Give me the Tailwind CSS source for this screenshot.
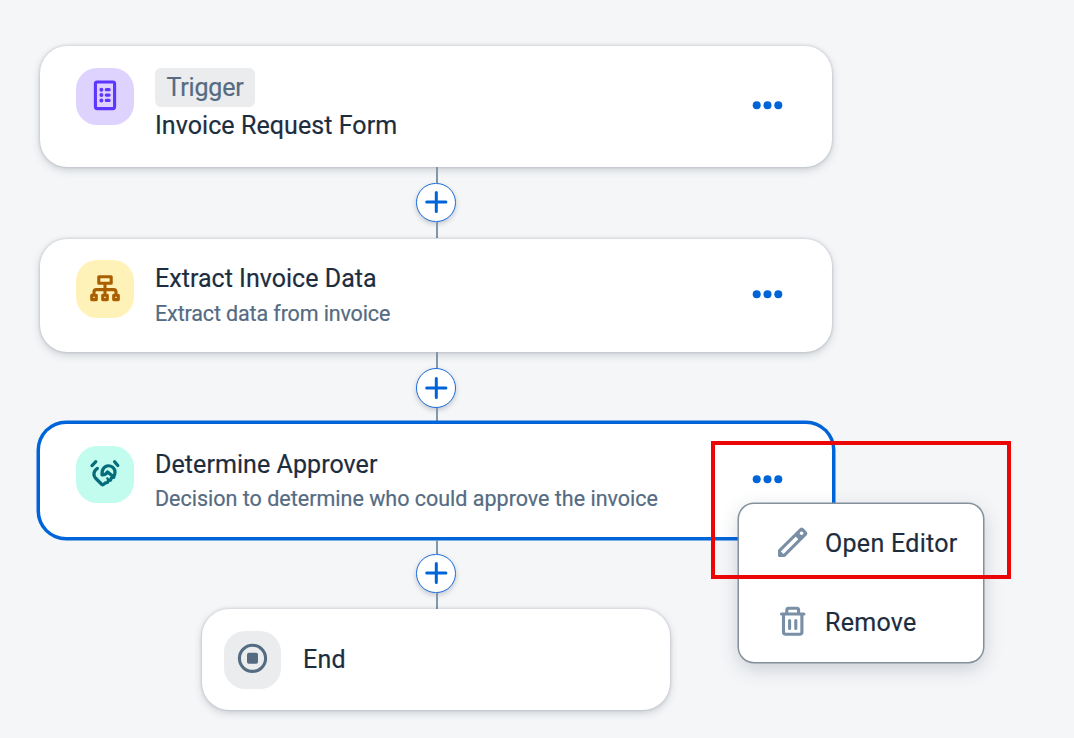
<!DOCTYPE html>
<html lang="en">
<head>
<meta charset="utf-8">
<title>Process flow</title>
<script src="https://cdn.jsdelivr.net/npm/@tailwindcss/browser@4"></script>
</head>
<body class="bg-[#f5f6f8] text-[#1d2d3e] [-webkit-text-stroke:0.2px]" style="font-family: Roboto, 'Liberation Sans', sans-serif">
<main class="relative w-[1074px] h-[738px] overflow-hidden pl-10 pt-[46px]">
  <div class="w-[792px] flex flex-col items-center">

    <!-- Trigger -->
    <section class="w-full h-[121px] rounded-[27px] bg-white shadow-[0_0_3px_rgba(34,53,72,0.25),0_3px_8px_rgba(34,53,72,0.2)] flex items-start pl-9 pt-[22px]">
      <div class="w-[58px] h-[57px] rounded-[21px] bg-[#ded3ff] flex justify-center">
        <svg class="w-[58px] h-[57px]" viewBox="0 0 58 57" fill="none" stroke="#5d36ff">
          <rect x="19.4" y="14" width="19.2" height="26.6" rx="1.8" stroke-width="3.1"/>
          <g stroke-width="3.2" stroke-linecap="round"><path d="M25.4 21.7v0M25.4 27.1v0M25.4 32.4v0" stroke-width="4"/><path d="M30.3 21.7h2.8M30.3 27.1h2.8M30.3 32.4h2.8"/></g>
        </svg>
      </div>
      <div class="ml-[21px] flex flex-col items-start">
        <div class="w-[100px] h-[39px] rounded-[6px] bg-[#eaecee] text-[#556b82] text-[25px] leading-[39px] text-center tracking-[-0.2px]">Trigger</div>
        <div class="h-[36px] text-[25px] leading-[37px] whitespace-nowrap tracking-[0.07px]">Invoice Request Form</div>
      </div>
      <svg class="ml-auto mr-[49px] mt-[32px] w-[31px] h-[10px]" viewBox="0 0 31 10" fill="#0064d9"><circle cx="4.7" cy="5.2" r="4"/><circle cx="15.5" cy="5.2" r="4"/><circle cx="26.3" cy="5.2" r="4"/></svg>
    </section>

    <div class="h-[71px] w-10 flex flex-col items-center">
      <div class="h-4 w-[2px] ml-[2px] bg-[#8496a9]"></div>
      <div class="w-10 h-[39px] shrink-0 rounded-full border-[1.5px] border-[#1b6cdc] bg-white shadow-[0_2px_5px_rgba(34,53,72,0.25)] flex items-center justify-center">
        <svg class="size-6 mb-[1px]" viewBox="0 0 24 24" stroke="#0064d9" stroke-width="3" stroke-linecap="round"><path d="M12.3 2.4v19.2M2.7 12h19.2"/></svg>
      </div>
      <div class="flex-1 w-[2px] ml-[2px] bg-[#8496a9]"></div>
    </div>

    <!-- Extraction step -->
    <section class="w-full h-[113px] mt-[1px] rounded-[27px] bg-white shadow-[0_0_3px_rgba(34,53,72,0.25),0_3px_8px_rgba(34,53,72,0.2)] flex items-start pl-9 pt-[21px]">
      <div class="w-[58px] h-[58px] rounded-[21px] bg-[#fff2b8]">
        <svg class="size-[58px]" viewBox="0 0 58 58" fill="none" stroke="#a95f00" stroke-width="3.1" stroke-linejoin="round" stroke-linecap="round">
          <rect x="22.8" y="16.7" width="12.4" height="6.6"/><path d="M29 23.5v11M18 34.5v-2.6q0-2.3 2.3-2.3h17.4q2.3 0 2.3 2.3v2.6"/>
          <rect x="15.7" y="35.3" width="4.6" height="4.3"/><rect x="26.7" y="35.3" width="4.6" height="4.3"/><rect x="37.7" y="35.3" width="4.6" height="4.3"/>
        </svg>
      </div>
      <div class="ml-[21px] whitespace-nowrap">
        <div class="text-[25px] leading-[37px] tracking-[0.03px]">Extract Invoice Data</div>
        <div class="text-[21.5px] leading-[33px] tracking-[-0.13px] text-[#556b82]">Extract data from invoice</div>
      </div>
      <svg class="ml-auto mr-[49px] mt-[29px] w-[31px] h-[10px]" viewBox="0 0 31 10" fill="#0064d9"><circle cx="4.7" cy="5.2" r="4"/><circle cx="15.5" cy="5.2" r="4"/><circle cx="26.3" cy="5.2" r="4"/></svg>
    </section>

    <div class="h-[69px] w-10 flex flex-col items-center">
      <div class="h-4 w-[2px] ml-[2px] bg-[#8496a9]"></div>
      <div class="size-10 shrink-0 rounded-full border-[1.5px] border-[#1b6cdc] bg-white shadow-[0_2px_5px_rgba(34,53,72,0.25)] flex items-center justify-center">
        <svg class="size-6" viewBox="0 0 24 24" stroke="#0064d9" stroke-width="3" stroke-linecap="round"><path d="M12.3 2.4v19.2M2.7 12h19.2"/></svg>
      </div>
      <div class="flex-1 w-[2px] ml-[2px] bg-[#8496a9]"></div>
    </div>

    <!-- Selected decision step -->
    <section class="w-full h-[113px] mt-[3px] mb-[3px] rounded-[26px] shadow-[0_0_0_3.5px_#0064d9] bg-white flex items-start pl-9 pt-[22px]">
      <div class="w-[58px] h-[57px] rounded-[21px] bg-[#c2fcee]">
        <svg class="w-[58px] h-[57px]" viewBox="0 0 58 57" fill="none" stroke="#046c7a" stroke-width="3.2" stroke-linejoin="round" stroke-linecap="round">
          <path d="M16 19.6l3.8-3.9M38.6 15.7l3.2 3.9"/>
          <path d="M21.4 22.4C17.3 25 16.9 29.5 19.9 32.5l6 6q.7.6 1.5 0l2.2-1.7 1.9-.3.9-1.9 2.2-.4.5-2 2.7-1.2"/>
          <path d="M37.5 30.6c2.2-2.8 2.1-6.9-.8-9.3-2.7-2.1-6.3-1.9-8.6.3-1.7 1.7-2.3 4.2-2.1 7.3 2.3.2 4.4-1 5.6-3l6.2 5.2"/>
          <path d="M31.2 32.3l1.6 1.9" stroke-width="2.2"/>
        </svg>
      </div>
      <div class="ml-[21px] whitespace-nowrap">
        <div class="text-[25px] leading-[37px] tracking-[0.07px]">Determine Approver</div>
        <div class="text-[21.5px] leading-[31px] text-[#556b82]">Decision to determine who could approve the invoice</div>
      </div>
      <svg class="ml-auto mr-[49px] mt-[28px] w-[31px] h-[10px]" viewBox="0 0 31 10" fill="#0064d9"><circle cx="4.7" cy="5.2" r="4"/><circle cx="15.5" cy="5.2" r="4"/><circle cx="26.3" cy="5.2" r="4"/></svg>
    </section>

    <div class="h-[69px] w-10 flex flex-col items-center">
      <div class="h-[14px] w-[2px] ml-[2px] bg-[#8496a9]"></div>
      <div class="w-10 h-[39px] shrink-0 rounded-full border-[1.5px] border-[#1b6cdc] bg-white shadow-[0_2px_5px_rgba(34,53,72,0.25)] flex items-center justify-center">
        <svg class="size-6 mb-[1px]" viewBox="0 0 24 24" stroke="#0064d9" stroke-width="3" stroke-linecap="round"><path d="M12.3 2.4v19.2M2.7 12h19.2"/></svg>
      </div>
      <div class="flex-1 w-[2px] ml-[2px] bg-[#8496a9]"></div>
    </div>

    <!-- End -->
    <section class="w-[468px] h-[101px] rounded-[27px] bg-white shadow-[0_0_3px_rgba(34,53,72,0.25),0_3px_8px_rgba(34,53,72,0.2)] flex items-start pl-[22px] pt-[22px]">
      <div class="w-[57px] h-[58px] rounded-[21px] bg-[#eaecee]">
        <svg class="w-[57px] h-[58px]" viewBox="0 0 57 58" fill="none"><circle cx="28.5" cy="27.3" r="13.1" stroke="#556b82" stroke-width="3.1"/><rect x="23" y="21.7" width="11" height="11" rx="1.8" fill="#556b82"/></svg>
      </div>
      <div class="ml-[22px] text-[25px] leading-[58px] tracking-[0.3px]">End</div>
    </section>
  </div>

  <!-- Context menu -->
  <div class="absolute left-[739px] top-[504px] w-[244px] h-[158px] rounded-[15px] bg-white shadow-[0_0_0_1.5px_#84909c,0_6px_20px_rgba(34,53,72,0.22)] flex flex-col">
    <div class="h-[78px] flex items-center pl-[38px]">
      <svg class="w-[32px] h-[32px] -mt-[2px]" viewBox="0 0 32 32" fill="none" stroke="#788fa6" stroke-width="3" stroke-linejoin="round">
        <path d="M2.5 24.6v4.8h4.8L28.6 8.1a1 1 0 0 0 0-1.4l-3.3-3.3a1 1 0 0 0-1.4 0z"/><path d="M18.8 8.5l4.7 4.7"/><path d="M2.5 25.5l4 4H2.5z" fill="#788fa6" stroke-width="2"/><path d="M19.5 8l4.4 4.4 4.7-4.6-4.4-4.4z" fill="#788fa6" stroke="none"/><circle cx="24.6" cy="7.3" r="1.8" fill="#fff" stroke="none"/>
      </svg>
      <div class="ml-[16px] pt-[2px] text-[25px] whitespace-nowrap tracking-[0.3px]">Open Editor</div>
    </div>
    <div class="h-[80px] flex items-center pl-[38px]">
      <svg class="w-[32px] h-[32px] -mt-[3px]" viewBox="0 0 32 32" fill="none" stroke="#788fa6" stroke-width="3.1" stroke-linejoin="round" stroke-linecap="round">
        <path d="M4.5 9h22.4M9.8 8.6V5.2q0-1.9 1.9-1.9h8q1.9 0 1.9 1.9v3.4M6.5 9.5v17.6q0 2.2 2.2 2.2h14q2.2 0 2.2-2.2V9.5M12.6 15.6v7.8M18.8 15.6v7.8"/>
      </svg>
      <div class="ml-[16px] pt-[2px] text-[25px] tracking-[0.3px]">Remove</div>
    </div>
  </div>

  <!-- Highlight frame -->
  <div class="absolute left-[711px] top-[441px] w-[300px] h-[138px] border-4 border-[#eb0606]"></div>
</main>
</body>
</html>
